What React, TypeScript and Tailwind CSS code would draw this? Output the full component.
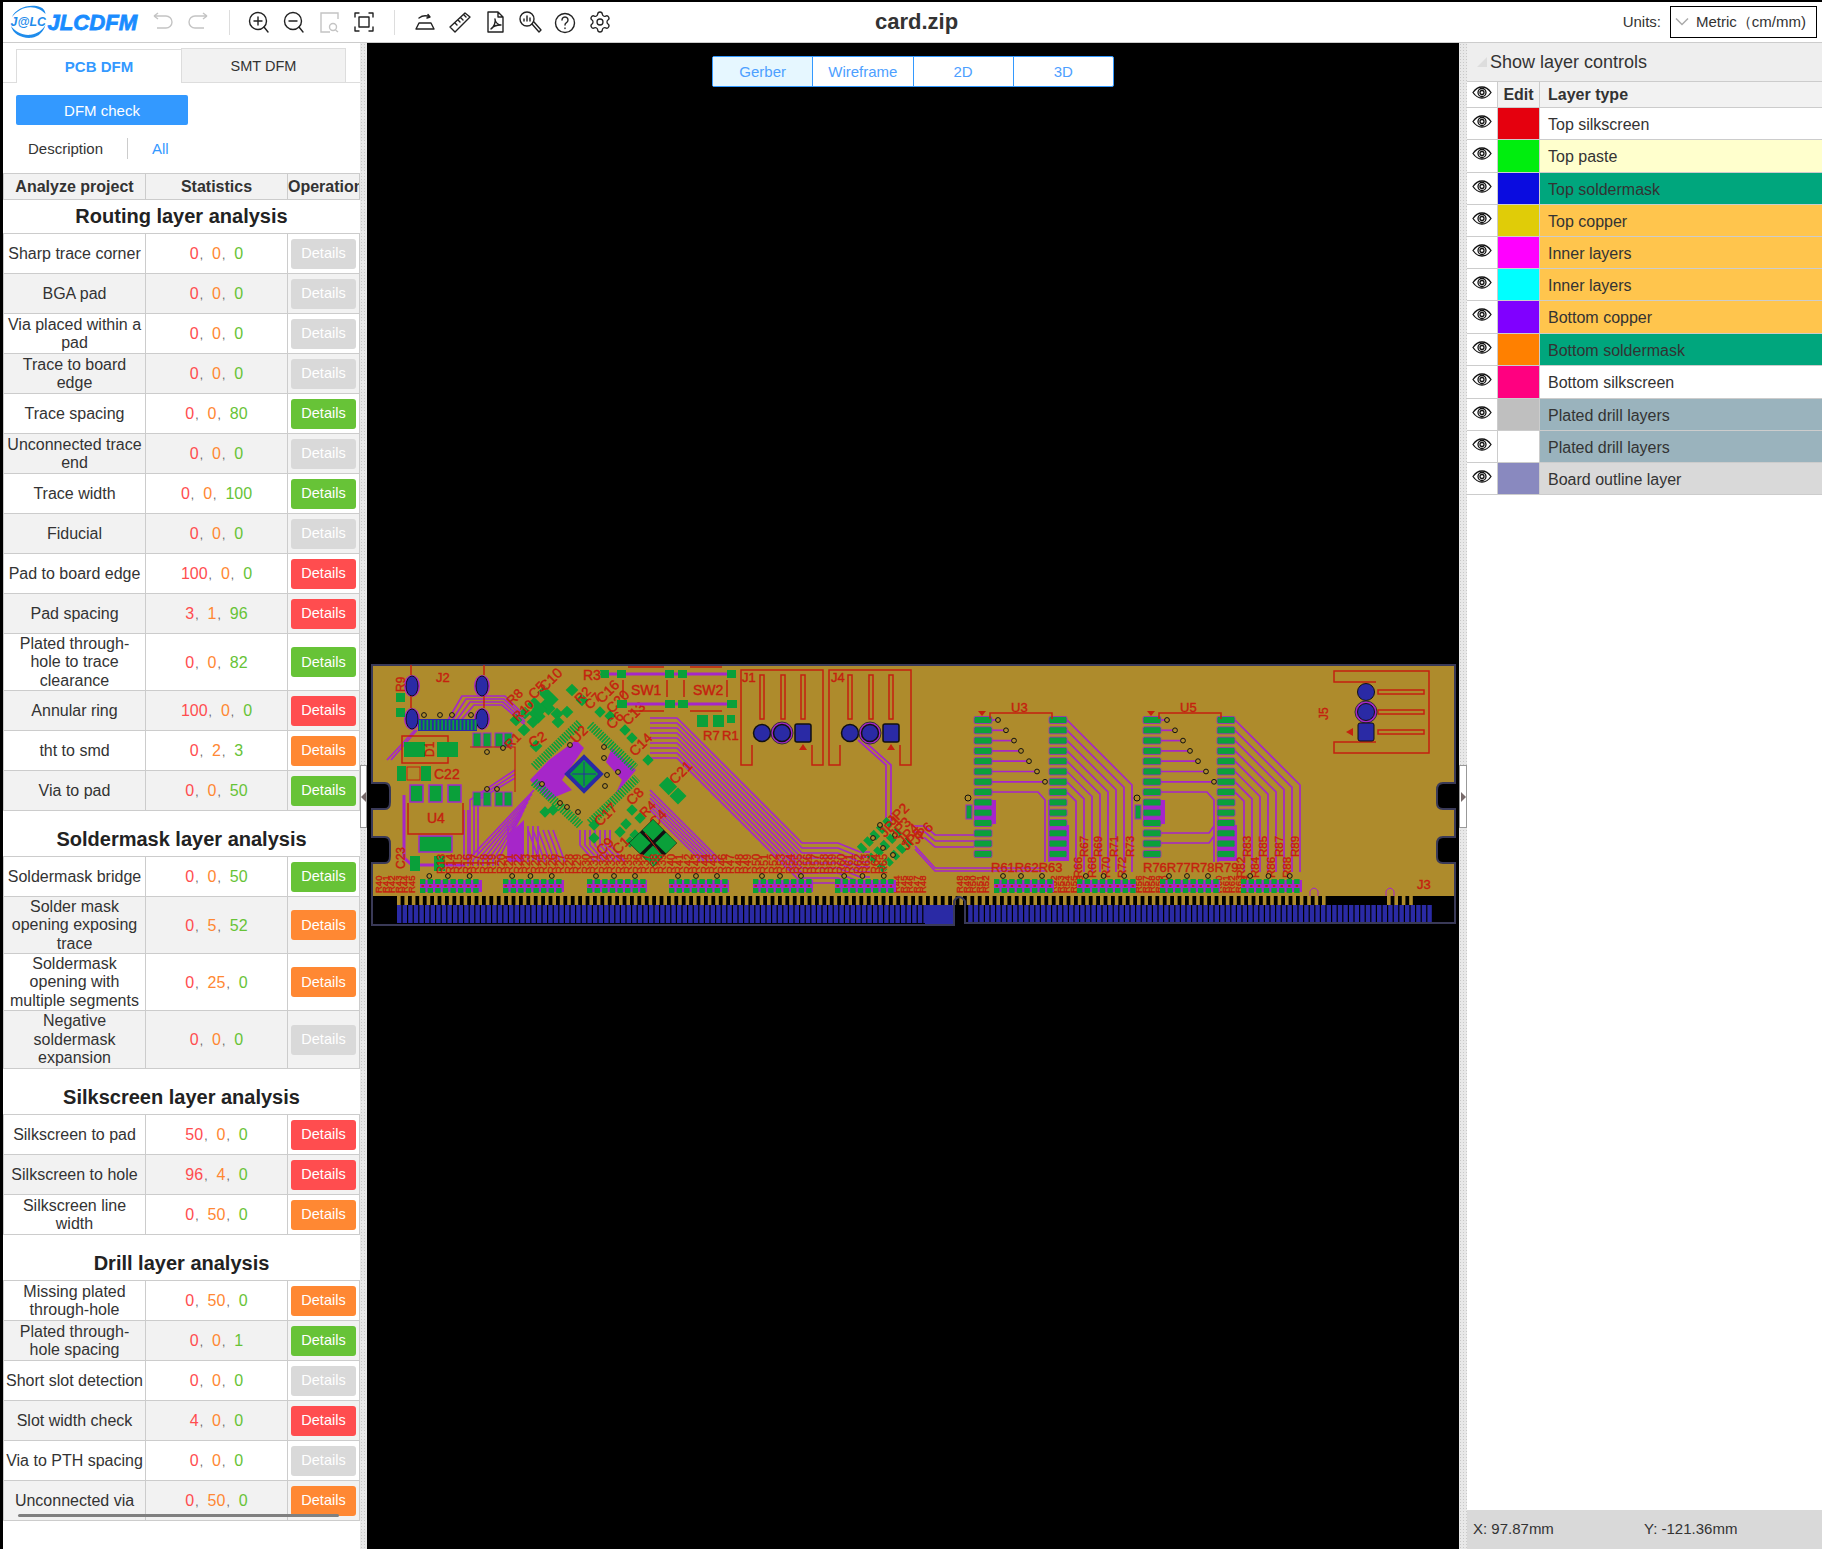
import React from "react";
import { Settings } from "lucide-react";

const CU = "#ae8b2c", TR = "#a626c9", SILK = "#c4210f", PAD = "#0aa03a", HOLE = "#2a2aa5", EDGE = "#3a3a58";

type Row = [string, number, number, number, number?];
const routing: Row[] = [
  ["Sharp trace corner", 0, 0, 0], ["BGA pad", 0, 0, 0], ["Via placed within a pad", 0, 0, 0], ["Trace to board edge", 0, 0, 0],
  ["Trace spacing", 0, 0, 80], ["Unconnected trace end", 0, 0, 0], ["Trace width", 0, 0, 100], ["Fiducial", 0, 0, 0],
  ["Pad to board edge", 100, 0, 0], ["Pad spacing", 3, 1, 96], ["Plated through-\nhole to trace\nclearance", 0, 0, 82, 57],
  ["Annular ring", 100, 0, 0], ["tht to smd", 0, 2, 3], ["Via to pad", 0, 0, 50],
];
const mask: Row[] = [
  ["Soldermask bridge", 0, 0, 50], ["Solder mask opening exposing trace", 0, 5, 52, 57],
  ["Soldermask opening with multiple segments", 0, 25, 0, 57], ["Negative soldermask expansion", 0, 0, 0, 58],
];
const silk: Row[] = [["Silkscreen to pad", 50, 0, 0], ["Silkscreen to hole", 96, 4, 0], ["Silkscreen line width", 0, 50, 0]];
const drill: Row[] = [
  ["Missing plated through-hole", 0, 50, 0], ["Plated through-\nhole spacing", 0, 0, 1], ["Short slot detection", 0, 0, 0],
  ["Slot width check", 4, 0, 0], ["Via to PTH spacing", 0, 0, 0], ["Unconnected via", 0, 50, 0],
];

function Nums({ a, b, c }: { a: number; b: number; c: number }) {
  const comma = <span className="text-[12px] text-[#666] ml-[1px] mr-[9px]">,</span>;
  return (
    <div className="flex items-baseline justify-center text-[16px] pt-px">
      <span className="text-[#ff4d4f]">{a}</span>{comma}
      <span className="text-[#ff8833]">{b}</span>{comma}
      <span className="text-[#67c337]">{c}</span>
    </div>
  );
}

function DetailsBtn({ a, b, c }: { a: number; b: number; c: number }) {
  const cls = a > 0 ? "bg-[#ff4d4f]" : b > 0 ? "bg-[#ff8833]" : c > 0 ? "bg-[#67c337]" : "bg-[#d9d9d9]";
  return <div className={`w-[65px] h-[30px] pt-px rounded-[3px] flex items-center justify-center text-[14.5px] text-white ${cls}`}>Details</div>;
}

function Section({ title, rows, h }: { title: string; rows: Row[]; h: string }) {
  return (
    <div>
      <div className={`${h} flex items-end justify-center border-b border-[#ccc] pb-[5px] text-[20px] leading-[24px] font-bold text-[#222]`}>{title}</div>
      {rows.map((r, i) => (
        <div
          key={r[0]}
          className={`grid grid-cols-[142px_142px_72px] border-l border-b border-[#ccc] ${i % 2 ? "bg-[#f2f2f2]" : "bg-white"}`}
          style={{ height: r[4] ?? 40 }}
        >
          <div className="border-r border-[#ccc] pt-px flex items-center justify-center text-center whitespace-pre-line text-[16px] leading-[18.4px] text-[#333]">{r[0]}</div>
          <div className="border-r border-[#ccc] flex items-center justify-center"><Nums a={r[1]} b={r[2]} c={r[3]} /></div>
          <div className="border-r border-[#ccc] flex items-center justify-center"><DetailsBtn a={r[1]} b={r[2]} c={r[3]} /></div>
        </div>
      ))}
    </div>
  );
}

function Eye() {
  return (
    <svg width="20" height="13" viewBox="0 0 20 13" fill="none" stroke="#111" strokeWidth="1.3">
      <path d="M1 6.5C4 2 7 1 10 1s6 1 9 5.5C16 11 13 12 10 12S4 11 1 6.5Z" />
      <circle cx="10" cy="6.5" r="4" />
      <circle cx="10" cy="6.5" r="2" />
    </svg>
  );
}

const layers: [string, string, string, number][] = [
  ["#e5000e", "#ffffff", "Top silkscreen", 32], ["#00ee0e", "#ffffcd", "Top paste", 33], ["#0a0ce0", "#00a67d", "Top soldermask", 32],
  ["#e0cc08", "#ffc54d", "Top copper", 32], ["#ff00ff", "#ffc54d", "Inner layers", 32], ["#00ffff", "#ffc54d", "Inner layers", 32],
  ["#8000ff", "#ffc54d", "Bottom copper", 33], ["#ff8000", "#00a67d", "Bottom soldermask", 32], ["#ff0080", "#ffffff", "Bottom silkscreen", 33],
  ["#bfbfbf", "#9ab3bd", "Plated drill layers", 32], ["#ffffff", "#9ab3bd", "Plated drill layers", 32], ["#8989bf", "#d9d9d9", "Board outline layer", 32],
];

function Gutter({ w, dir }: { w: string; dir: "l" | "r" }) {
  return (
    <div className={`${w} shrink-0 relative bg-[#e8e8e8] bg-[radial-gradient(#c8c8c8_1px,transparent_1px)] bg-[length:3px_3px]`}>
      <div className="absolute top-[722px] left-0 right-0 h-[63px] bg-white border border-[#999] flex items-center justify-center">
        {dir === "l"
          ? <div className="w-0 h-0 border-y-[5px] border-y-transparent border-r-[5px] border-r-[#776a6a]" />
          : <div className="w-0 h-0 border-y-[5px] border-y-transparent border-l-[5px] border-l-[#776a6a]" />}
      </div>
    </div>
  );
}

const ic = { fill: "none", stroke: "#222", strokeWidth: 1.4, strokeLinecap: "round" as const, strokeLinejoin: "round" as const };

function Icon({ children, left }: { children: React.ReactNode; left?: number }) {
  return <svg width="24" height="24" viewBox="0 0 24 24" style={left ? { marginLeft: left } : undefined} {...ic}>{children}</svg>;
}

function Logo() {
  return (
    <div className="flex items-center ml-[5px] w-[140px] shrink-0">
      <svg width="142" height="36" viewBox="0 0 142 36">
        <path d="M4 13C8 4 22-1 33 3c3 1 5 4 5 7-3-4-9-7-15-7C15 3 9 7 4 13Z" fill="#1f8ceb" />
        <path d="M3 22c2 8 11 13 21 12 7-1 12-6 14-13-3 5-8 9-15 10-8 1-15-3-20-9Z" fill="#1f8ceb" />
        <text x="20.5" y="22" textAnchor="middle" fontFamily="'Liberation Sans',sans-serif" fontWeight="700" fontStyle="italic" fontSize="12.5" fill="#1f8ceb">J@LC</text>
        <text x="40" y="26" fontFamily="'Liberation Sans',sans-serif" fontWeight="700" fontStyle="italic" fontSize="22.5" fill="#1a8cff" stroke="#1a8cff" strokeWidth="0.8">JLCDFM</text>
      </svg>
    </div>
  );
}

function TopBar() {
  return (
    <div className="h-[41px] shrink-0 bg-white border-b border-[#ccc] flex items-center relative ml-[3px]">
      <Logo />
      <div className="flex items-center ml-[3px]">
        <svg width="24" height="24" viewBox="0 0 24 24" fill="none" stroke="#c4c4c4" strokeWidth="1.4"><path d="M3 6h12a6 6 0 0 1 0 12H6M3 6l4-3M3 6l4 3" /></svg>
        <svg width="24" height="24" viewBox="0 0 24 24" fill="none" stroke="#c4c4c4" strokeWidth="1.4" className="ml-[11px]"><path d="M21 6H9a6 6 0 0 0 0 12h9M21 6l-4-3M21 6l-4 3" /></svg>
        <div className="w-px h-[25px] bg-[#ddd] ml-[19px]" />
        <Icon left={17}><circle cx="11" cy="11" r="8.5" /><path d="M11 7v8M7 11h8M17 17l4 5" /></Icon>
        <Icon left={11}><circle cx="11" cy="11" r="8.5" /><path d="M7 11h8M17 17l4 5" /></Icon>
        <svg width="24" height="24" viewBox="0 0 24 24" fill="none" stroke="#c4c4c4" strokeWidth="1.4" className="ml-[11px]"><path d="M21 9V3H4v19h9" /><circle cx="16" cy="17" r="3.5" /><path d="M18.5 20l2.5 2" /></svg>
        <Icon left={11}><rect x="7" y="7" width="10" height="10" /><path d="M3 7V3h4M17 3h4v4M21 17v4h-4M7 21H3v-4" /></Icon>
        <div className="w-px h-[25px] bg-[#ddd] ml-[18px]" />
        <Icon left={18}><path d="M3 19h18M3 19l3-6h12l3 6H3M6 8c4-3 7-3 11-1M17 7l-2-2.500M17 7l-3 1" /></Icon>
        <Icon left={11}><path d="M2 17 17 3l5 4L7 22l-5-5ZM7 13l2 2M10 10l2 2M13 8l2 2M16 5l2 2" /></Icon>
        <Icon left={11}><path d="M5 2h10l5 5v15H5V2ZM15 2v5h5M8 19c3-2 5-7 4-10 0 3 3 6 6 6-4 0-8 1-10 4Z" /></Icon>
        <Icon left={11}><circle cx="9" cy="9" r="7" /><path d="M6 11V9M9 11V6M12 11V8" /><path d="M14 14l7 8 2-2-7-8" /></Icon>
        <Icon left={11}><circle cx="12" cy="13" r="9.500" /><path d="M9 10a3 3 0 1 1 4.500 2.600c-1 .6-1.500 1.200-1.500 2.400M12 18v.5" /></Icon>
        <div className="ml-[11px] w-[24px] h-[24px] flex items-center justify-center"><Settings size={24} strokeWidth={1.3} color="#222" /></div>
      </div>
      <div className="absolute left-[872px] top-[6px] text-[22px] leading-[28px] font-bold text-[#333]">card.zip</div>
      <div className="ml-auto flex items-center">
        <span className="text-[15px] text-[#333] mr-[9px] pt-px">Units:</span>
        <div className="w-[147px] h-[32px] border border-black flex items-center mr-[5px]">
          <svg width="16" height="10" viewBox="0 0 16 10" fill="none" stroke="#aaa" strokeWidth="1.5" className="ml-[3px]"><path d="M2 1.5l6 6 6-6" /></svg>
          <span className="text-[15px] text-[#333] ml-[6px] pt-px whitespace-nowrap">Metric（cm/mm)</span>
        </div>
      </div>
    </div>
  );
}

function Bus({ n, pts }: { n: number; pts: (i: number) => [number, number][] }) {
  return (
    <g fill="none" stroke={TR} strokeWidth="1.7">
      {Array.from({ length: n }, (_, i) => <polyline key={i} points={pts(i).map((p) => p.join(",")).join(" ")} />)}
    </g>
  );
}

function RP({ x, y, w, h, a = 45, c = PAD }: { x: number; y: number; w: number; h: number; a?: number; c?: string }) {
  return <rect x={x - w / 2} y={y - h / 2} width={w} height={h} fill={c} transform={`rotate(${a} ${x} ${y})`} />;
}

function T({ x, y, s = 14, r = 0, children }: { x: number; y: number; s?: number; r?: number; children: React.ReactNode }) {
  return <text x={x} y={y} fontSize={s} fill={SILK} stroke={SILK} strokeWidth="0.4" fontFamily="'Liberation Sans',sans-serif" transform={r ? `rotate(${r} ${x} ${y})` : undefined}>{children}</text>;
}

function Hole({ x, y, ring, sq }: { x: number; y: number; ring?: boolean; sq?: boolean }) {
  return (
    <g>
      {ring && <circle cx={x} cy={y} r="11" fill={TR} stroke="#333" strokeWidth="1" />}
      {sq ? <rect x={x - 8} y={y - 9} width="16" height="18" rx="2" fill={HOLE} stroke="#111" /> : <circle cx={x} cy={y} r="8.5" fill={HOLE} stroke="#111" />}
    </g>
  );
}

function Via({ x, y }: { x: number; y: number }) {
  return <circle cx={x} cy={y} r="2.4" fill={CU} stroke="#111" strokeWidth="1" />;
}

function Soic({ dx, rs, label }: { dx: number; rs: number; label: string }) {
  const ys = Array.from({ length: 14 }, (_, i) => 720 + 10.3 * i);
  const vx = [998, 1006, 1014, 1021, 1029, 1037, 1045];
  const rx = 1049 + dx + rs;
  return (
    <g>
      <Bus n={8} pts={(i) => {
        const y = ys[i], x = rx + 18, tx = rx + 83 - 8 * i;
        return [[x, y], [tx, y + (tx - x)], [tx, 872]];
      }} />
      <Bus n={7} pts={(i) => [[992 + dx, ys[i]], [vx[i] + dx, ys[i]]]} />
      <polyline points={`${992 + dx},792 ${1038 + dx},792 ${1045 + dx},800 ${1045 + dx},862`} fill="none" stroke={TR} strokeWidth="1.7" />
      <polyline points={`${1049 + dx},800 ${1049 + dx},862`} fill="none" stroke={TR} strokeWidth="1.7" />
      <rect x={974 + dx} y={800} width="22" height="24" fill={TR} />
      <rect x={rx} y={825} width="20" height="36" fill={TR} />
      {dx > 0 && <Bus n={2} pts={(i) => [[992 + dx, 833 + i * 10], [1040 + dx, 833 + i * 10], [1045 + dx, 826 + i * 10]]} />}
      {ys.map((y) => (
        <g key={y}>
          <rect x={974 + dx} y={y - 3.5} width="18" height="7" rx="1.5" fill={PAD} stroke={TR} strokeWidth="0.8" />
          <rect x={rx} y={y - 3.5} width="18" height="7" rx="1.5" fill={PAD} stroke={TR} strokeWidth="0.8" />
        </g>
      ))}
      {vx.map((x, i) => <Via key={x} x={x + dx} y={ys[i]} />)}
      <polyline points={`${990 + dx},719 ${990 + dx},713 ${1052 + dx},713 ${1052 + dx},719`} fill="none" stroke={SILK} strokeWidth="1.5" />
      <polygon points={`${978 + dx},711 ${986 + dx},711 ${982 + dx},716`} fill={SILK} />
      <T x={1011 + dx} y={712} s={13}>{label}</T>
      <rect x={966 + dx} y={805} width="6" height="14" fill={PAD} stroke={TR} />
      <circle cx={968 + dx} cy={798} r="3" fill={CU} stroke="#111" />
    </g>
  );
}

function Board() {
  const outline = "M372,665H1455V783H1443Q1437,783 1437,790V803Q1437,809 1443,809H1455V837H1443Q1437,837 1437,844V857Q1437,863 1443,863H1455V923H965V901Q959,893 954,901V925H372V863H385Q390,863 390,856V844Q390,837 385,837H372V809H385Q390,809 390,802V790Q390,783 385,783H372Z";
  const groups = [[420, 482], [503, 564], [587, 647], [669, 729], [753, 813], [835, 896], [994, 1054], [1077, 1136], [1160, 1220], [1241, 1302]];
  const stubs: number[] = [], blues: number[] = [];
  for (let x = 397; x < 1327; x += 7.4) stubs.push(x);
  for (let x = 1387; x < 1410; x += 7.4) stubs.push(x);
  for (let x = 397; x < 1428; x += 5.6) if (x < 925 || x > 965) blues.push(x);
  const labels: [number, number, number][] = [];
  for (let i = 0; i < 53; i++) labels.push([445 + i * 8.5, 874, 13 + i]);
  const minis = [382, 900, 963, 1057, 1142, 1222];
  return (
    <svg viewBox="367 43 1092 1506" className="absolute inset-0 w-[1092px] h-[1506px]">
      <path d={outline} fill={CU} />
      <rect x="373" y="896" width="1081" height="28" fill="#000" />
      {stubs.map((x) => <rect key={x} x={x} y="895" width="3.6" height="10" fill={CU} />)}
      {blues.map((x) => <rect key={x} x={x} y="905" width="4.4" height="18" fill={HOLE} />)}
      <rect x="925" y="905" width="29" height="20" fill={HOLE} />
      <path d={outline} fill="none" stroke={EDGE} strokeWidth="2" />

      {/* traces */}
      <Bus n={9} pts={(i) => [[650, 718 + 5 * i], [677, 718 + 5 * i], [802, 843 + 5 * i], [838, 843 + 5 * i], [860, 852 + 5 * i], [870, 852 + 5 * i]]} />
      <Bus n={6} pts={(i) => [[650, 790 + 4 * i], [718 - 4 * i, 858], [720 - 4 * i, 862]]} />
      <Bus n={7} pts={(i) => [[534 - i * 2, 790 + 4 * i], [468 + i * 5, 860], [468 + i * 5, 866]]} />
      <Bus n={7} pts={(i) => [[508 + i * 5, 826], [508 + i * 5, 862]]} />
      <Bus n={6} pts={(i) => [[528 + i * 5, 830], [540 + i * 5, 862]]} />
      <Bus n={7} pts={(i) => [[580 + i * 5, 830], [580 + i * 5, 845], [595 + i * 5, 862]]} />
      <Bus n={3} pts={(i) => [[912 + i * 2, 826 + i * 6], [925, 826 + i * 6], [935, 835 + i * 6], [974, 835 + i * 6]]} />
      <Bus n={2} pts={(i) => [[915, 846 + i * 3], [935, 868 + i * 3], [1045, 868 + i * 3]]} />
      <Bus n={2} pts={(i) => [[858 + i * 5, 740], [886 + i * 5, 765], [886 + i * 5, 826]]} />
      <polygon points="549,760 576,740 584,748 562,780 572,790 548,800 530,780" fill={TR} />
      <polygon points="612,748 636,770 615,795 622,780 606,762" fill={TR} />
      <polygon points="508,835 524,820 524,862 508,862" fill={TR} />
      <Bus n={4} pts={(i) => [[445 + i * 4, 725], [462 + i * 4, 696 + i * 3], [505 - i, 696 + i * 3], [525, 716 + i * 3]]} />
      <Bus n={2} pts={(i) => [[387 + i * 4, 760], [415 + i * 2, 730]]} />
      <Bus n={3} pts={(i) => [[470 + i * 4, 855], [470 + i * 4, 800], [515, 770 + i * 4]]} />
      <Bus n={2} pts={(i) => [[464 + i * 4, 810], [464 + i * 4, 860]]} />
      <polyline points="404,795 404,858 412,865 465,865" fill="none" stroke={TR} strokeWidth="3" />

      {/* J2 */}
      {[[412, 686], [482, 686], [412, 719], [482, 719]].map(([x, y]) => (
        <g key={x + "-" + y}>
          <ellipse cx={x} cy={y} rx="8" ry="11" fill={TR} />
          <ellipse cx={x} cy={y} rx="6" ry="10" fill={HOLE} stroke="#111" />
        </g>
      ))}
      <line x1="411" y1="665" x2="411" y2="675" stroke={SILK} strokeWidth="1.5" />
      <line x1="484" y1="665" x2="484" y2="675" stroke={SILK} strokeWidth="1.5" />
      <line x1="411" y1="696" x2="411" y2="708" stroke={SILK} strokeWidth="1.5" />
      <line x1="484" y1="696" x2="484" y2="708" stroke={SILK} strokeWidth="1.5" />
      <rect x="418" y="719" width="59" height="12" fill={HOLE} />
      {Array.from({ length: 16 }, (_, i) => <rect key={i} x={419 + i * 3.7} y="720" width="1.8" height="10" fill={PAD} />)}
      {[[424, 715], [440, 715], [452, 715], [471, 715]].map(([x, y]) => <Via key={x} x={x} y={y} />)}
      <T x={436} y={682} s={13}>J2</T>
      <T x={405} y={692} s={12} r={-90}>R9</T>
      <rect x="396" y="693" width="9" height="9" fill={PAD} /><rect x="396" y="708" width="9" height="9" fill={PAD} />
      {/* D1 C22 U4 */}
      <rect x="402" y="736" width="46" height="27" fill="none" stroke={SILK} strokeWidth="1.5" />
      <rect x="404" y="742" width="21" height="15" fill={PAD} /><rect x="437" y="742" width="21" height="15" fill={PAD} />
      <T x={434} y={757} s={12} r={-90}>D1</T>
      <rect x="397" y="766" width="9" height="15" fill={PAD} /><rect x="421" y="766" width="10" height="15" fill={PAD} />
      <rect x="407" y="767" width="13" height="13" fill="none" stroke={SILK} />
      <T x={434} y={779} s={14}>C22</T>
      {[410, 429, 448].map((x) => <rect key={x} x={x} y="785" width="13" height="17" fill={PAD} stroke={TR} strokeWidth="1.5" />)}
      <polyline points="408,803 408,834 463,834 463,803" fill="none" stroke={SILK} strokeWidth="1.5" />
      <T x={427} y={823} s={14}>U4</T>
      <rect x="419" y="836" width="33" height="16" fill={PAD} stroke={TR} strokeWidth="1.5" />
      <rect x="410" y="856" width="10" height="15" fill={PAD} /><rect x="434" y="856" width="11" height="15" fill={PAD} />
      <T x={405} y={869} s={12} r={-90}>C23</T>
      {[473, 483, 495, 504].flatMap((x) => [733, 792].map((y) => <rect key={x + "" + y} x={x} y={y} width="8" height="14" fill={PAD} stroke={TR} />))}
      <polyline points="470,747 515,747 515,792" fill="none" stroke={SILK} strokeWidth="1.2" />
      {[[487, 752], [503, 748], [487, 789], [497, 789]].map(([x, y]) => <Via key={x + "" + y} x={x} y={y} />)}

      {/* U2 */}
      <g stroke={PAD} strokeWidth="9" strokeDasharray="1.6 1.2" fill="none">
        <line x1="534" y1="767" x2="580" y2="723" /><line x1="590" y1="725" x2="635" y2="768" />
        <line x1="534" y1="782" x2="580" y2="825" /><line x1="590" y1="823" x2="637" y2="778" />
      </g>
      <RP x={584} y={774} w={28} h={28} c={HOLE} />
      <RP x={584} y={774} w={20} h={20} c={PAD} />
      <line x1="584" y1="762" x2="584" y2="786" stroke={HOLE} /><line x1="572" y1="774" x2="596" y2="774" stroke={HOLE} />
      {[[542, 784], [560, 803], [604, 747], [604, 758], [607, 775], [605, 786], [618, 772], [567, 807], [578, 812], [570, 745]].map(([x, y]) => <Via key={x + "." + y} x={x} y={y} />)}
      {/* caps */}
      {[[547, 707, 14, 10], [537, 715, 14, 10], [525, 713, 9, 9], [533, 722, 9, 9], [516, 720, 9, 9], [524, 730, 9, 9], [557, 714, 9, 9], [567, 712, 9, 9], [558, 722, 9, 9], [536, 746, 9, 9], [572, 690, 9, 9], [582, 700, 9, 9], [600, 712, 8, 8], [610, 716, 8, 8], [625, 730, 8, 8], [632, 738, 8, 8], [648, 760, 8, 8], [668, 786, 14, 12], [678, 796, 12, 12], [632, 810, 8, 8], [640, 818, 8, 8], [626, 824, 8, 8], [620, 832, 8, 8], [594, 825, 8, 8], [553, 810, 8, 8], [545, 812, 8, 8], [635, 835, 8, 8], [630, 842, 8, 8], [594, 838, 8, 8]].map(([x, y, w, h], i) => <RP key={i} x={x} y={y} w={w} h={h} />)}
      <RP x={548} y={696} w={20} h={10} a={45} c={PAD} />
      <RP x={537} y={707} w={18} h={10} a={45} c={PAD} />
      <T x={534} y={700} s={14} r={-45}>C5</T><T x={545} y={692} s={14} r={-45}>C10</T>
      <T x={512} y={706} s={13} r={-45}>R8</T><T x={518} y={722} s={13} r={-45}>R10</T>
      <T x={580} y={704} s={13} r={-45}>R2</T><T x={590} y={710} s={13} r={-45}>C7</T>
      <T x={602} y={704} s={14} r={-45}>C16</T><T x={612} y={714} s={14} r={-45}>C20</T>
      <T x={612} y={730} s={14} r={-45}>C6</T><T x={628} y={726} s={14} r={-45}>C13</T>
      <T x={635} y={757} s={14} r={-45}>C14</T><T x={576} y={744} s={14} r={-45}>U2</T>
      <T x={532} y={748} s={14} r={-30}>C2</T><T x={510} y={750} s={13} r={-45}>R1</T>
      <T x={675} y={785} s={14} r={-45}>C21</T><T x={632} y={806} s={14} r={-45}>C8</T>
      <T x={600} y={827} s={14} r={-45}>C17</T><T x={602} y={856} s={14} r={-45}>C9</T>
      <T x={618} y={855} s={14} r={-45}>C1</T><T x={645} y={818} s={13} r={-45}>R4</T><T x={655} y={828} s={14} r={-45}>C4</T>

      {/* big xtal */}
      <RP x={653} y={843} w={34} h={34} c="#111" />
      {[[653, 830], [666, 843], [640, 843], [653, 856]].map(([x, y]) => <RP key={x + "" + y} x={x} y={y} w={15} h={15} />)}
      <line x1="645" y1="833" x2="660" y2="853" stroke={SILK} />

      {/* SW */}
      <path d="M623,680V697M667,680V697M684,680V697M727,680V697" stroke={SILK} strokeWidth="1.5" />
      <path d="M628,667H664M690,667H722M628,711H664M690,711H722" stroke={SILK} strokeWidth="1.5" />
      <line x1="600" y1="674" x2="736" y2="674" stroke={TR} strokeWidth="3" />
      <line x1="617" y1="704" x2="736" y2="704" stroke={TR} strokeWidth="3" />
      {[600, 617, 665, 678, 727].map((x) => <rect key={x} x={x} y="670" width="9" height="8" fill={PAD} />)}
      {[617, 665, 678, 727].map((x) => <rect key={x} x={x} y="700" width="10" height="8" fill={PAD} />)}
      <T x={631} y={695} s={14}>SW1</T><T x={693} y={695} s={14}>SW2</T><T x={583} y={680} s={14}>R3</T>
      <rect x="697" y="715" width="11" height="12" fill={PAD} /><rect x="713" y="715" width="11" height="12" fill={PAD} />
      <T x={703} y={740} s={13}>R7</T><T x={722} y={740} s={13}>R1</T>
      <rect x="727" y="715" width="8" height="8" fill={PAD} />

      {/* J1 J4 */}
      {[0, 88].map((d) => (
        <g key={d} fill="none" stroke={SILK} strokeWidth="1.5">
          <polyline points={`${752 + d},745 ${752 + d},765 ${741 + d},765 ${741 + d},670 ${823 + d},670 ${823 + d},765 ${812 + d},765 ${812 + d},745`} />
          {[760, 781, 801].map((x) => <rect key={x} x={x + d} y="675" width="4" height="44" />)}
          <Hole x={762 + d} y={733} />
          <Hole x={782 + d} y={733} ring />
          <Hole x={803 + d} y={733} sq />
          <polygon points={`${803 + d},744 ${807 + d},750 ${799 + d},750`} fill={SILK} stroke="none" />
        </g>
      ))}
      <T x={742} y={682} s={13}>J1</T><T x={831} y={682} s={13}>J4</T>

      {/* JP */}
      <g>
        {[0, 1, 2].map((k) => (
          <line key={k} x1={860 + k * 10} y1={850 + k * 10} x2={890 + k * 10} y2={820 + k * 10} stroke={PAD} strokeWidth="9" strokeDasharray="6 3" />
        ))}
        {[[873, 838], [883, 848], [893, 855], [895, 835], [880, 825]].map(([x, y]) => <Via key={x + "" + y} x={x} y={y} />)}
      </g>
      <T x={885} y={838} s={14} r={-45}>JP1</T><T x={893} y={826} s={14} r={-45}>JP2</T>
      <T x={895} y={840} s={14} r={-45}>JP3</T><T x={903} y={846} s={14} r={-45}>JP4</T>
      <T x={907} y={851} s={14} r={-45}>JP5</T><T x={917} y={845} s={14} r={-45}>JP6</T>

      <Soic dx={0} rs={0} label="U3" />
      <Soic dx={169} rs={-1} label="U5" />

      {/* J5 */}
      <g transform="translate(-3 0)">
        <path d="M1379,682H1337V671H1432V753H1337V742H1379" fill="none" stroke={SILK} strokeWidth="1.5" />
        {[690, 710, 730].map((y) => <rect key={y} x="1381" y={y} width="46" height="4" fill="none" stroke={SILK} strokeWidth="1.5" />)}
        <Hole x={1369} y={692} /><Hole x={1369} y={712} ring /><Hole x={1369} y={732} sq />
        <polygon points="1349,732 1356,728 1356,736" fill={SILK} />
        <T x={1331} y={720} s={12} r={-90}>J5</T>
      </g>

      {/* bottom groups */}
      {labels.map(([x, y, n]) => <T key={x} x={x} y={y} s={11} r={-90}>{"R" + n}</T>)}
      {minis.flatMap((mx, k) => Array.from({ length: k === 0 ? 6 : 5 }, (_, i) => (
        <T key={mx + "-" + i} x={mx + i * 6.5} y={893} s={9.5} r={-90}>{"R" + (40 + k * 4 + i)}</T>
      )))}
      <T x={991} y={872} s={13}>R61R62R63</T>
      <T x={1143} y={872} s={13}>R76R77R78R79</T>
      {[1082, 1096, 1110, 1126, 1245, 1259, 1275, 1291].map((x, i) => <T key={x} x={x} y={878} s={11.5} r={-90}>{"R" + [66, 68, 70, 72, 82, 84, 86, 88][i]}</T>)}
      {[1088, 1102, 1118, 1134, 1251, 1267, 1283, 1299].map((x, i) => <T key={x} x={x} y={857} s={11.5} r={-90}>{"R" + [67, 69, 71, 73, 83, 85, 87, 89][i]}</T>)}
      {groups.map(([a, b]) => {
        const n = Math.round((b - a) / 7.6);
        return (
          <g key={a}>
            <rect x={a} y="880" width={b - a} height="12" fill={TR} />
            {Array.from({ length: n }, (_, i) => (
              <g key={i}>
                <rect x={a + i * 7.6} y="879" width="5.4" height="5" fill={PAD} />
                <rect x={a + i * 7.6} y="888" width="5.4" height="5" fill={PAD} />
                <rect x={a + 1.5 + i * 7.6} y="885" width="2.4" height="2" fill={SILK} />
              </g>
            ))}
            {[0.15, 0.45, 0.8].map((f) => <Via key={f} x={a + (b - a) * f} y={876} />)}
          </g>
        );
      })}
      <T x={1417} y={889} s={13}>J3</T>
      <path d="M1310,896v-5q4,-6 8,0v5M1386,896v-5q4,-6 8,0v5" fill="none" stroke={TR} />
    </svg>
  );
}

function Main() {
  const tabs = ["Gerber", "Wireframe", "2D", "3D"];
  return (
    <div className="w-[1092px] shrink-0 bg-black relative overflow-hidden">
      <Board />
      <div className="absolute left-[345px] top-[13px] flex w-[402px] h-[31px] rounded-[2px] border border-[#3399ff] bg-white text-[15px] text-[#4da0ff]">
        {tabs.map((t, i) => (
          <div key={t} className={`flex-1 pt-[2px] flex items-center justify-center ${i ? "border-l border-[#3399ff]" : "bg-[#e6f7ff]"}`}>{t}</div>
        ))}
      </div>
    </div>
  );
}

function Left() {
  return (
    <div className="w-[357px] shrink-0 bg-white relative overflow-hidden">
      <div className="h-[40px] flex items-end border-b border-[#ddd] pl-[13px]">
        <div className="w-[165px] h-[34px] pt-px border-t border-l border-[#ddd] bg-white -mb-px flex items-center justify-center text-[15px] font-semibold text-[#3399ff]">PCB DFM</div>
        <div className="w-[165px] h-[34px] pt-[2px] border border-b-0 border-[#ddd] bg-[#f2f2f2] flex items-center justify-center text-[14.5px] text-[#333]">SMT DFM</div>
      </div>
      <div className="ml-[13px] mt-[12px] w-[172px] h-[30px] pt-[2px] bg-[#3399ff] rounded-[2px] flex items-center justify-center text-[15px] text-white">DFM check</div>
      <div className="flex items-center h-[21px] mt-[13px] text-[15px]">
        <span className="ml-[25px] pt-px text-[#333]">Description</span>
        <div className="w-px h-[21px] bg-[#ccc] ml-[24px]" />
        <span className="ml-[24px] pt-px text-[#3399ff]">All</span>
      </div>
      <div className="mt-[14px] grid grid-cols-[142px_142px_72px] h-[27px] border border-r-0 border-[#ccc] bg-[#f2f2f2] text-[16px] font-bold text-[#333] text-center">
        <div className="border-r border-[#ccc] flex items-center justify-center">Analyze project</div>
        <div className="border-r border-[#ccc] flex items-center justify-center">Statistics</div>
        <div className="border-r border-[#ccc] overflow-hidden whitespace-nowrap flex items-center">Operation</div>
      </div>
      <Section title="Routing layer analysis" rows={routing} h="h-[34px]" />
      <Section title="Soldermask layer analysis" rows={mask} h="h-[46px]" />
      <Section title="Silkscreen layer analysis" rows={silk} h="h-[46px]" />
      <Section title="Drill layer analysis" rows={drill} h="h-[46px]" />
      <div className="absolute left-[15px] top-[1471px] w-[321px] h-[3px] rounded-full bg-[#808080]" />
    </div>
  );
}

function Right() {
  return (
    <div className="flex-1 bg-white flex flex-col">
      <div className="h-[39px] shrink-0 bg-[#eee] border-b border-[#ccc] flex items-center">
        <div className="ml-[10px] w-0 h-0 border-b-[10px] border-b-[#ddd] border-l-[10px] border-l-transparent" />
        <span className="ml-[3px] text-[18px] text-[#333]">Show layer controls</span>
      </div>
      <div className="grid grid-cols-[31px_42px_1fr] h-[26px] bg-[#f2f2f2] border-b border-[#ccc] text-[16px] font-bold text-[#333]">
        <div className="border-r border-[#ccc] bg-white flex justify-center pt-[4px]"><Eye /></div>
        <div className="border-r border-[#ccc] pt-px flex items-center justify-center">Edit</div>
        <div className="flex items-center pt-px pl-[8px]">Layer type</div>
      </div>
      {layers.map(([c, bg, name, h], i) => (
        <div key={i} className="grid grid-cols-[31px_42px_1fr] border-b border-[#ccc]" style={{ height: h }}>
          <div className="border-r border-[#ccc] flex justify-center pt-[7px]"><Eye /></div>
          <div className="border-r border-[#ccc]" style={{ backgroundColor: c }} />
          <div className="flex items-center pl-[8px] pt-[2px] text-[16px] text-[#333]" style={{ backgroundColor: bg }}>{name}</div>
        </div>
      ))}
      <div className="mt-auto h-[39px] bg-[#d9d9d9] flex items-center text-[15px] text-[#333]">
        <span className="ml-[6px] w-[171px]">X: 97.87mm</span>
        <span>Y: -121.36mm</span>
      </div>
    </div>
  );
}

export default function App() {
  return (
    <div className="w-[1822px] h-[1549px] bg-black pt-[2px] flex flex-col overflow-hidden font-['Liberation_Sans',Arial,sans-serif]">
      <TopBar />
      <div className="flex flex-1 min-h-0 pl-[3px]">
        <Left />
        <Gutter w="w-[7px]" dir="l" />
        <Main />
        <Gutter w="w-[8px]" dir="r" />
        <Right />
      </div>
    </div>
  );
}
